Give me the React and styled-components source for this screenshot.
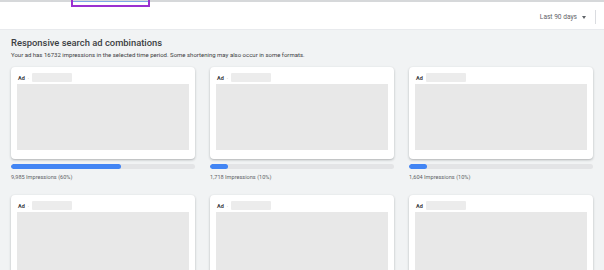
import React from 'react';
import styled, { createGlobalStyle } from 'styled-components';

const GlobalStyle = createGlobalStyle`
    html, body {
        margin: 0;
        padding: 0;
        background: #f1f3f4;
        font-family: Roboto, "Liberation Sans", Arial, sans-serif;
        overflow: hidden;
    }
`;

const Page = styled.div`
    width: 604px;
    height: 270px;
    overflow: hidden;
    background: #f1f3f4;
    position: relative;
`;

const TopBar = styled.div`
    height: 27px;
    background: #fff;
    border-top: 2px solid #d6d8da;
    border-bottom: 1px solid #e8eaed;
    display: flex;
    align-items: center;
    justify-content: flex-end;
    padding-right: 8px;
`;

// marcação roxa sobre a aba selecionada
const TabHighlight = styled.div`
    position: absolute;
    left: 71px;
    top: -2px;
    width: 75px;
    height: 7px;
    border: 2px solid #9b30d0;
    border-top: none;
    &::before {
        content: '';
        position: absolute;
        left: 0;
        right: 0;
        top: 3px;
        height: 1px;
        background: #7fa8e8;
    }
`;

const DateRange = styled.div`
    display: flex;
    align-items: center;
    gap: 5px;
    font-size: 6.6px;
    color: #5f6368;
    padding-right: 9px;
    margin-top: 3px;
`;

const Caret = styled.span`
    width: 0;
    height: 0;
    border-left: 2.5px solid transparent;
    border-right: 2.5px solid transparent;
    border-top: 3px solid #5f6368;
`;

const Divider = styled.div`
    width: 1px;
    height: 14px;
    background: #dadce0;
    margin-top: 3px;
`;

const Content = styled.div`
    padding: 7px 12px 0 11px;
`;

const Title = styled.h2`
    margin: 0;
    font-size: 9.4px;
    font-weight: 500;
    color: #3c4043;
    line-height: 12px;
`;

const Subtitle = styled.p`
    margin: 2px 0 0;
    font-size: 6px;
    color: #3c4043;
    line-height: 8px;
`;

const Grid = styled.div`
    display: grid;
    grid-template-columns: repeat(3, 184px);
    column-gap: 15px;
    row-gap: 15px;
    margin-top: 8px;
`;

const Combo = styled.div`
    display: flex;
    flex-direction: column;
`;

const Card = styled.div`
    background: #fff;
    border-radius: 4px;
    box-shadow: 0 1px 2px rgba(60, 64, 67, 0.25), 0 1px 3px rgba(60, 64, 67, 0.12);
    padding: 6px 6px 9px 6px;
    height: 92px;
    box-sizing: border-box;
`;

const AdHeader = styled.div`
    display: flex;
    align-items: center;
    gap: 3px;
    height: 9px;
    margin-bottom: 2px;
`;

const AdLabel = styled.span`
    font-size: 5.5px;
    font-weight: 700;
    color: #3c4043;
    padding-left: 1px;
`;

const Dot = styled.span`
    font-size: 5px;
    color: #9aa0a6;
`;

const UrlPill = styled.span`
    width: 40px;
    height: 9px;
    background: #ececec;
    border-radius: 1px;
`;

const Preview = styled.div`
    height: 66px;
    background: #e8e8e8;
`;

const Track = styled.div`
    margin-top: 5px;
    height: 5px;
    border-radius: 3px;
    background: #e3e4e6;
    overflow: hidden;
`;

const Fill = styled.div`
    height: 100%;
    border-radius: 3px;
    background: #4285f4;
`;

const Impressions = styled.div`
    margin-top: 5px;
    font-size: 5.6px;
    color: #5f6368;
`;

const combos = [
    { text: '9,985 Impressions (60%)', pct: 60, dot: true },
    { text: '1,718 Impressions (10%)', pct: 10, dot: true },
    { text: '1,604 Impressions (10%)', pct: 10, dot: false },
    { text: '', pct: 0, dot: true },
    { text: '', pct: 0, dot: true },
    { text: '', pct: 0, dot: false },
];

function App() {
    return (
        <Page>
            <GlobalStyle />
            <TopBar>
                <DateRange>
                    Last 90 days <Caret />
                </DateRange>
                <Divider />
            </TopBar>
            <TabHighlight />
            <Content>
                <Title>Responsive search ad combinations</Title>
                <Subtitle>
                    Your ad has 16732 impressions in the selected time period. Some shortening may also occur in some formats.
                </Subtitle>
                <Grid>
                    {combos.map((c, i) => (
                        <Combo key={i}>
                            <Card>
                                <AdHeader>
                                    <AdLabel>Ad</AdLabel>
                                    {c.dot && <Dot>·</Dot>}
                                    <UrlPill />
                                </AdHeader>
                                <Preview />
                            </Card>
                            {c.text && (
                                <>
                                    <Track>
                                        <Fill style={{ width: `${c.pct}%` }} />
                                    </Track>
                                    <Impressions>{c.text}</Impressions>
                                </>
                            )}
                        </Combo>
                    ))}
                </Grid>
            </Content>
        </Page>
    );
}

export default App;
